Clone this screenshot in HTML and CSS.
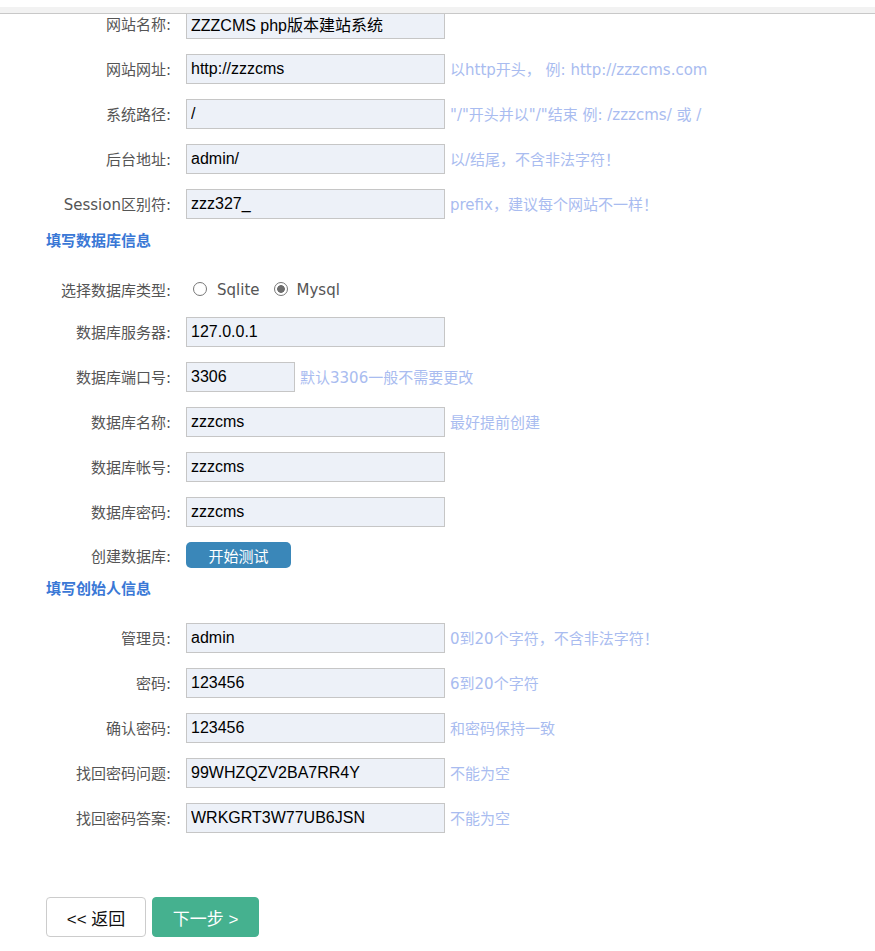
FILE: index.html
```html
<!DOCTYPE html>
<html lang="zh-CN">
<head>
<meta charset="utf-8">
<title>安装 - 填写配置信息</title>
<link rel="stylesheet" href="styles.css">
</head>
<body>
<div class="topbar"></div>
<form class="form">
  <div class="row"><label class="lbl">网站名称:</label><input class="inp" value="ZZZCMS php版本建站系统"></div>
  <div class="row"><label class="lbl">网站网址:</label><input class="inp" value="http://zzzcms"><span class="hint">以http开头， 例: http://zzzcms.com</span></div>
  <div class="row"><label class="lbl">系统路径:</label><input class="inp" value="/"><span class="hint">"/"开头并以"/"结束 例: /zzzcms/ 或 /</span></div>
  <div class="row"><label class="lbl">后台地址:</label><input class="inp" value="admin/"><span class="hint">以/结尾，不含非法字符！</span></div>
  <div class="row"><label class="lbl">Session区别符:</label><input class="inp" value="zzz327_"><span class="hint">prefix，建议每个网站不一样！</span></div>

  <div class="sec">填写数据库信息</div>
  <div class="row radios"><label class="lbl">选择数据库类型:</label>
    <input type="radio" name="db" class="rd" id="r1"><label for="r1" class="rt">Sqlite</label>
    <input type="radio" name="db" class="rd" id="r2" checked><label for="r2" class="rt">Mysql</label>
  </div>
  <div class="row"><label class="lbl">数据库服务器:</label><input class="inp" value="127.0.0.1"></div>
  <div class="row"><label class="lbl">数据库端口号:</label><input class="inp short" value="3306"><span class="hint">默认3306一般不需要更改</span></div>
  <div class="row"><label class="lbl">数据库名称:</label><input class="inp" value="zzzcms"><span class="hint">最好提前创建</span></div>
  <div class="row"><label class="lbl">数据库帐号:</label><input class="inp" value="zzzcms"></div>
  <div class="row"><label class="lbl">数据库密码:</label><input class="inp" value="zzzcms"></div>
  <div class="row btnrow"><label class="lbl">创建数据库:</label><button type="button" class="test">开始测试</button></div>

  <div class="sec sec2">填写创始人信息</div>
  <div class="row"><label class="lbl">管理员:</label><input class="inp" value="admin"><span class="hint">0到20个字符，不含非法字符！</span></div>
  <div class="row"><label class="lbl">密码:</label><input class="inp" value="123456"><span class="hint">6到20个字符</span></div>
  <div class="row"><label class="lbl">确认密码:</label><input class="inp" value="123456"><span class="hint">和密码保持一致</span></div>
  <div class="row"><label class="lbl">找回密码问题:</label><input class="inp" value="99WHZQZV2BA7RR4Y"><span class="hint">不能为空</span></div>
  <div class="row"><label class="lbl">找回密码答案:</label><input class="inp" value="WRKGRT3W77UB6JSN"><span class="hint">不能为空</span></div>

  <div class="actions">
    <button type="button" class="back">&lt;&lt; 返回</button>
    <button type="button" class="next">下一步 &gt;</button>
  </div>
</form>
</body>
</html>
```
FILE: styles.css
```css
html, body {
  margin: 0;
  padding: 0;
  background: #fff;
}
body {
  font-family: "DejaVu Sans", "Noto Sans CJK SC", sans-serif;
  font-size: 15px;
  color: #555;
}
.topbar {
  position: fixed;
  top: 0;
  left: 0;
  right: 0;
  height: 6px;
  border-top: 7px solid #fff;
  background: #f2f2f2;
  border-bottom: 1px solid #c8c8c8;
  z-index: 5;
}
.form {
  padding: 9px 0 0 46px;
}
.row {
  display: flex;
  align-items: center;
  height: 30px;
  margin-bottom: 15px;
}
.lbl {
  width: 125px;
  margin-right: 15px;
  margin-top: -2px;
  text-align: right;
  white-space: nowrap;
  flex: none;
  color: #555;
}
.inp {
  box-sizing: border-box;
  width: 259px;
  height: 30px;
  border: 1px solid #c6c6c6;
  background: #edf1f8;
  padding: 0 4px;
  margin: 0;
  font-family: "Liberation Sans", "Noto Sans CJK SC", sans-serif;
  font-size: 16px;
  color: #000;
  outline: none;
}
.inp.short {
  width: 109px;
}
.hint {
  margin-left: 5px;
  margin-top: -1px;
  color: #a9bcf0;
  white-space: nowrap;
}
.sec {
  font-weight: bold;
  color: #3a78d6;
  line-height: 14px;
  height: 14px;
  margin-bottom: 27px;
}
.radios {
  margin-bottom: 12px;
}
.rd {
  appearance: none;
  -webkit-appearance: none;
  box-sizing: border-box;
  width: 14px;
  height: 14px;
  border: 1px solid #777;
  border-radius: 50%;
  margin: -3px 10px 0 7px;
  background: #fff;
  flex: none;
}
.rd:checked {
  background: radial-gradient(circle, #6d6d6d 0 3.5px, #fff 4.2px);
}
.rd + .rt + .rd {
  margin-left: 14px;
  margin-right: 9px;
}
.rt {
  color: #555;
}
.btnrow {
  height: 26px;
  margin-bottom: 14px;
}
.btnrow .lbl {
  margin-top: 0;
}
.test {
  box-sizing: border-box;
  width: 105px;
  height: 26px;
  border: none;
  border-radius: 5px;
  background: #3a87b9;
  color: #fff;
  font-family: "Noto Sans CJK SC", sans-serif;
  font-size: 15px;
  padding: 0;
}
.actions {
  display: flex;
  gap: 6px;
  margin-top: 64px;
}
.back, .next {
  box-sizing: border-box;
  height: 40px;
  border-radius: 4px;
  font-family: "Liberation Sans", "Noto Sans CJK SC", sans-serif;
  font-size: 17px;
  padding: 0;
}
.back {
  width: 100px;
  background: #fff;
  border: 1px solid #ccc;
  color: #111;
}
.next {
  width: 107px;
  background: #45b18f;
  border: 1px solid #45b18f;
  color: #fff;
}
```
